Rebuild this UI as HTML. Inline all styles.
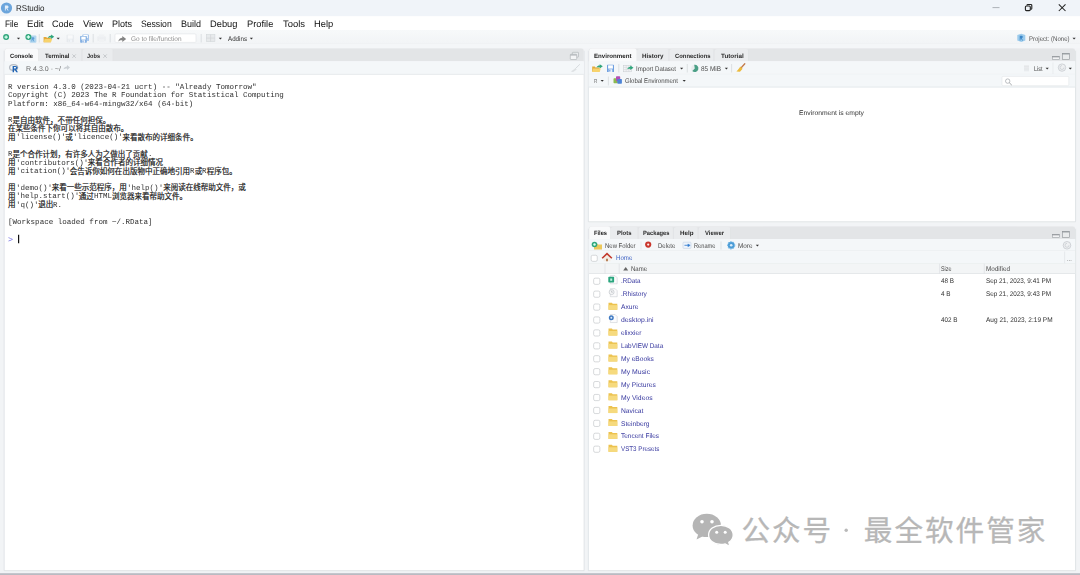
<!DOCTYPE html>
<html lang="en"><head><meta charset="utf-8"><title>RStudio</title>
<style>
html,body{margin:0;padding:0;}
body{width:1080px;height:575px;position:relative;overflow:hidden;background:#f2f4f6;font-family:"Liberation Sans", sans-serif;}
.t{position:absolute;white-space:pre;line-height:1;transform-origin:0 0;font-family:"Liberation Sans", sans-serif;text-rendering:geometricPrecision;}
.m{font-family:"Liberation Mono", monospace;}
svg{position:absolute;left:0;top:0;}
#txt{position:absolute;left:0;top:0;width:1080px;height:575px;will-change:transform;}
.cj{font-family:"Liberation Mono","Noto Sans CJK SC",monospace;font-size:7.53px;fill:#1a1a1a;stroke:#1a1a1a;stroke-width:0.2;}
.wm{font-family:"Liberation Sans","Noto Sans CJK SC",sans-serif;font-size:28.6px;fill:#b7b7b7;stroke:#b7b7b7;stroke-width:0.3;letter-spacing:2px;}
</style></head><body>
<svg width="1080" height="575" viewBox="0 0 1080 575">
<defs>
<linearGradient id="tg" x1="0" y1="0" x2="0" y2="1"><stop offset="0" stop-color="#f7f9fa"/><stop offset="1" stop-color="#f2f4f6"/></linearGradient>
</defs>
<rect x="0.00" y="0.00" width="1080.00" height="16.20" fill="#f0f4f9"/>
<rect x="0.00" y="16.20" width="1080.00" height="13.80" fill="#fff"/>
<rect x="0.00" y="30.00" width="1080.00" height="545.00" fill="#f2f4f6"/>
<rect x="0" y="30" width="1080" height="13.4" fill="url(#tg)"/>
<rect x="0.00" y="43.30" width="1080.00" height="0.60" fill="#eef0f2"/>
<rect x="0.00" y="43.90" width="1080.00" height="4.40" fill="#f4f6f8"/>
<rect x="0.00" y="570.30" width="1080.00" height="3.00" fill="#f1f3f6"/>
<rect x="0.00" y="573.20" width="1080.00" height="1.80" fill="#b9bbc2"/>
<rect x="115.00" y="33.90" width="81.00" height="8.50" rx="1" fill="#fff" stroke="#e0e3e6" stroke-width="0.6"/>
<path d="M4.50 570.30V51.30a3 3 0 0 1 3 -3h573.30a3 3 0 0 1 3 3V570.30z" fill="#fff"/>
<path d="M4.15 50.80V570.65H584.15V50.80" fill="none" stroke="#dadee1" stroke-width="0.7"/>
<path d="M4.50 61.40V51.10a2.8 2.8 0 0 1 2.8 -2.8h573.70a2.8 2.8 0 0 1 2.8 2.8V61.40z" fill="#e3e5e7"/>
<path d="M5.00 61.80V51.10a2.5 2.5 0 0 1 2.5 -2.5h28.20a2.5 2.5 0 0 1 2.5 2.5V61.80z" fill="#f9fafb"/>
<path d="M38.60 61.00V51.60a2.5 2.5 0 0 1 2.5 -2.5h38.60a2.5 2.5 0 0 1 2.5 2.5V61.00z" fill="#eaecee"/>
<rect x="81.60" y="50.10" width="0.6" height="10.90" fill="#dcdfe1"/>
<path d="M82.60 61.00V51.60a2.5 2.5 0 0 1 2.5 -2.5h25.70a2.5 2.5 0 0 1 2.5 2.5V61.00z" fill="#eaecee"/>
<rect x="112.70" y="50.10" width="0.6" height="10.90" fill="#dcdfe1"/>
<rect x="4.50" y="61.30" width="579.30" height="13.30" fill="#f4f7f9"/>
<rect x="4.50" y="73.90" width="579.30" height="0.7" fill="#e1e5e7"/>
<path d="M588.70 221.40V51.30a3 3 0 0 1 3 -3h480.50a3 3 0 0 1 3 3V221.40z" fill="#fff"/>
<path d="M588.35 50.80V221.75H1075.55V50.80" fill="none" stroke="#dadee1" stroke-width="0.7"/>
<path d="M588.70 61.40V51.10a2.8 2.8 0 0 1 2.8 -2.8h480.90a2.8 2.8 0 0 1 2.8 2.8V61.40z" fill="#e3e5e7"/>
<path d="M589.20 61.80V51.10a2.5 2.5 0 0 1 2.5 -2.5h42.40a2.5 2.5 0 0 1 2.5 2.5V61.80z" fill="#f9fafb"/>
<path d="M637.00 61.00V51.60a2.5 2.5 0 0 1 2.5 -2.5h27.20a2.5 2.5 0 0 1 2.5 2.5V61.00z" fill="#eaecee"/>
<rect x="668.60" y="50.10" width="0.6" height="10.90" fill="#dcdfe1"/>
<path d="M669.60 61.00V51.60a2.5 2.5 0 0 1 2.5 -2.5h39.60a2.5 2.5 0 0 1 2.5 2.5V61.00z" fill="#eaecee"/>
<rect x="713.60" y="50.10" width="0.6" height="10.90" fill="#dcdfe1"/>
<path d="M714.60 61.00V51.60a2.5 2.5 0 0 1 2.5 -2.5h29.00a2.5 2.5 0 0 1 2.5 2.5V61.00z" fill="#eaecee"/>
<rect x="748.00" y="50.10" width="0.6" height="10.90" fill="#dcdfe1"/>
<rect x="588.70" y="61.30" width="486.50" height="13.20" fill="#f4f7f9"/>
<rect x="588.70" y="73.90" width="486.50" height="0.6" fill="#e6e9eb"/>
<rect x="588.70" y="74.50" width="486.50" height="12.90" fill="#f4f7f9"/>
<rect x="588.70" y="86.70" width="486.50" height="0.7" fill="#dfe3e5"/>
<rect x="1002.00" y="76.40" width="66.80" height="9.30" rx="1" fill="#fff" stroke="#e3e6e8" stroke-width="0.6"/>
<path d="M588.70 570.30V229.30a3 3 0 0 1 3 -3h480.50a3 3 0 0 1 3 3V570.30z" fill="#fff"/>
<path d="M588.35 228.80V570.65H1075.55V228.80" fill="none" stroke="#dadee1" stroke-width="0.7"/>
<path d="M588.70 239.40V229.10a2.8 2.8 0 0 1 2.8 -2.8h480.90a2.8 2.8 0 0 1 2.8 2.8V239.40z" fill="#e3e5e7"/>
<path d="M589.20 239.80V229.10a2.5 2.5 0 0 1 2.5 -2.5h16.10a2.5 2.5 0 0 1 2.5 2.5V239.80z" fill="#f9fafb"/>
<path d="M610.70 239.00V229.60a2.5 2.5 0 0 1 2.5 -2.5h22.60a2.5 2.5 0 0 1 2.5 2.5V239.00z" fill="#eaecee"/>
<rect x="637.70" y="228.10" width="0.6" height="10.90" fill="#dcdfe1"/>
<path d="M638.70 239.00V229.60a2.5 2.5 0 0 1 2.5 -2.5h29.80a2.5 2.5 0 0 1 2.5 2.5V239.00z" fill="#eaecee"/>
<rect x="672.90" y="228.10" width="0.6" height="10.90" fill="#dcdfe1"/>
<path d="M673.90 239.00V229.60a2.5 2.5 0 0 1 2.5 -2.5h19.40a2.5 2.5 0 0 1 2.5 2.5V239.00z" fill="#eaecee"/>
<rect x="697.70" y="228.10" width="0.6" height="10.90" fill="#dcdfe1"/>
<path d="M698.70 239.00V229.60a2.5 2.5 0 0 1 2.5 -2.5h27.10a2.5 2.5 0 0 1 2.5 2.5V239.00z" fill="#eaecee"/>
<rect x="730.20" y="228.10" width="0.6" height="10.90" fill="#dcdfe1"/>
<rect x="588.70" y="239.00" width="486.50" height="12.20" fill="#f4f7f9"/>
<rect x="588.70" y="250.60" width="486.50" height="0.6" fill="#e6e9eb"/>
<rect x="588.70" y="251.20" width="486.50" height="12.40" fill="#f4f7f9"/>
<rect x="588.70" y="263.00" width="486.50" height="0.6" fill="#e2e6e8"/>
<rect x="588.70" y="263.60" width="486.50" height="10.40" fill="#f3f5f6"/>
<rect x="588.70" y="273.30" width="486.50" height="0.7" fill="#dfe3e5"/>
<rect x="591.15" y="255.25" width="6.10" height="6.10" rx="1.5" fill="#fff" stroke="#c6c9cc" stroke-width="0.7"/>
<rect x="593.65" y="278.15" width="6.20" height="6.20" rx="1.5" fill="#fff" stroke="#c6c9cc" stroke-width="0.7"/>
<rect x="593.65" y="291.07" width="6.20" height="6.20" rx="1.5" fill="#fff" stroke="#c6c9cc" stroke-width="0.7"/>
<rect x="593.65" y="303.99" width="6.20" height="6.20" rx="1.5" fill="#fff" stroke="#c6c9cc" stroke-width="0.7"/>
<rect x="593.65" y="316.91" width="6.20" height="6.20" rx="1.5" fill="#fff" stroke="#c6c9cc" stroke-width="0.7"/>
<rect x="593.65" y="329.83" width="6.20" height="6.20" rx="1.5" fill="#fff" stroke="#c6c9cc" stroke-width="0.7"/>
<rect x="593.65" y="342.75" width="6.20" height="6.20" rx="1.5" fill="#fff" stroke="#c6c9cc" stroke-width="0.7"/>
<rect x="593.65" y="355.67" width="6.20" height="6.20" rx="1.5" fill="#fff" stroke="#c6c9cc" stroke-width="0.7"/>
<rect x="593.65" y="368.59" width="6.20" height="6.20" rx="1.5" fill="#fff" stroke="#c6c9cc" stroke-width="0.7"/>
<rect x="593.65" y="381.51" width="6.20" height="6.20" rx="1.5" fill="#fff" stroke="#c6c9cc" stroke-width="0.7"/>
<rect x="593.65" y="394.43" width="6.20" height="6.20" rx="1.5" fill="#fff" stroke="#c6c9cc" stroke-width="0.7"/>
<rect x="593.65" y="407.35" width="6.20" height="6.20" rx="1.5" fill="#fff" stroke="#c6c9cc" stroke-width="0.7"/>
<rect x="593.65" y="420.27" width="6.20" height="6.20" rx="1.5" fill="#fff" stroke="#c6c9cc" stroke-width="0.7"/>
<rect x="593.65" y="433.19" width="6.20" height="6.20" rx="1.5" fill="#fff" stroke="#c6c9cc" stroke-width="0.7"/>
<rect x="593.65" y="446.11" width="6.20" height="6.20" rx="1.5" fill="#fff" stroke="#c6c9cc" stroke-width="0.7"/>
<circle cx="6.5" cy="8" r="5.6" fill="#6ca5dc"/>
<path d="M4.9 10.6V5.5h1.9c1.1 0 1.7.55 1.7 1.4 0 .8-.5 1.3-1.3 1.45l1.5 2.25h-1l-1.35-2.1h-.6v2.1z" fill="#e6f0fa"/>
<path d="M992.5 7.6h7" stroke="#9aa0a6" stroke-width="0.8"/>
<rect x="1025.4" y="6" width="4.9" height="4.6" rx="1" fill="none" stroke="#222" stroke-width="1.1"/>
<path d="M1027 5.600V5.400a.9.9 0 0 1 .9-.9h3a.9.9 0 0 1 .9.9v3a.9.9 0 0 1-.9.9h-.3" fill="none" stroke="#222" stroke-width="1.100"/>
<path d="M1058.800 4.300l6.700 6.700M1065.500 4.300l-6.700 6.700" stroke="#222" stroke-width="1.050"/>
<circle cx="6.1" cy="37.1" r="3.0" fill="#2fa57b"/>
<path d="M4.3999999999999995 37.1h3.4M6.1 35.4v3.4" stroke="#d8fff0" stroke-width="1.3"/>
<path d="M16.90 37.80h3.2l-1.6 1.8z" fill="#333"/>
<rect x="29.6" y="35.6" width="6.8" height="7.2" rx="1" fill="#b1d6ef"/>
<path d="M31.5 41.6v-4.3h1.5c.9 0 1.4.4 1.4 1.15 0 .65-.4 1.05-1 1.2l1.2 1.95h-.9l-1.05-1.8h-.4v1.8z" fill="#5a9fd6"/>
<circle cx="28.4" cy="37.0" r="3.0" fill="#2fa57b"/>
<path d="M26.7 37.0h3.4M28.4 35.3v3.4" stroke="#d8fff0" stroke-width="1.3"/>
<path d="M39.30 34.00V42.50" stroke="#d3d7da" stroke-width="0.7"/>
<path d="M43.6 37.0h2.6l.7.8h3.9v4.4h-7.2z" fill="#e3a93a"/>
<path d="M44.6 38.9h7.6l-1.2 3.4h-7.4z" fill="#f7d36c"/>
<path d="M47.800000000000004 38.0c.5-1.600 1.800-2.200 3.300-2.200v-1.200l3.100 2.100-3.100 2.200v-1.300c-1.300 0-2.300.100-3.300.400z" fill="#2fa57b"/>
<path d="M56.60 37.80h3.2l-1.6 1.8z" fill="#333"/>
<g opacity="0.4"><rect x="66.6" y="34.8" width="7.2" height="7.4" rx="0.6" fill="#d5dae0"/><rect x="67.69999999999999" y="35.3" width="5.0" height="3.40" fill="#fff"/><rect x="68.3" y="39.39" width="3.8000000000000003" height="2.81" fill="#eef3fb"/><rect x="68.8" y="39.83" width="1.2" height="1.92" fill="#d5dae0"/></g>
<g opacity="1"><rect x="82.3" y="34.5" width="6.6" height="6.6" rx="0.6" fill="#9dc0ea"/><rect x="83.39999999999999" y="35.0" width="4.3999999999999995" height="3.04" fill="#fff"/><rect x="84.0" y="38.59" width="3.1999999999999997" height="2.51" fill="#eef3fb"/><rect x="84.5" y="38.99" width="1.2" height="1.72" fill="#9dc0ea"/></g>
<g opacity="1"><rect x="80.2" y="36.1" width="6.6" height="6.6" rx="0.6" fill="#79a9e0"/><rect x="81.3" y="36.6" width="4.3999999999999995" height="3.04" fill="#fff"/><rect x="81.9" y="40.19" width="3.1999999999999997" height="2.51" fill="#eef3fb"/><rect x="82.4" y="40.59" width="1.2" height="1.72" fill="#79a9e0"/></g>
<path d="M93.20 34.00V42.50" stroke="#d3d7da" stroke-width="0.7"/>
<g opacity="0.18"><rect x="97.3" y="36.3" width="8.6" height="4.6" rx="1" fill="#cfd3d8"/><rect x="99" y="34.5" width="5.2" height="2.4" fill="#dde0e4"/><rect x="99" y="39.2" width="5.2" height="2.8" fill="#e6e8ec"/></g>
<path d="M110.20 34.00V42.50" stroke="#d3d7da" stroke-width="0.7"/>
<path d="M118.2 41.6c.6-2.600 2.100-3.700 4.100-3.800v-1.900l3.900 3.100-3.900 3.100v-1.900c-1.700-.1-3 .2-4.100 1.400z" fill="#858585"/>
<path d="M201.20 34.00V42.50" stroke="#d3d7da" stroke-width="0.7"/>
<g opacity="0.75"><rect x="206.3" y="34.6" width="8.6" height="7" fill="#e3e6e8" stroke="#c9cdd1" stroke-width="0.6"/><path d="M206.3 38.1h8.6M210.6 34.6v7" stroke="#c2c6ca" stroke-width="0.6"/></g>
<path d="M218.80 37.80h3.2l-1.6 1.8z" fill="#333"/>
<path d="M249.80 37.80h3.2l-1.6 1.8z" fill="#333"/>
<path d="M1017.3 35l4-1.3 4 1.3v5.6l-4 1.5-4-1.500z" fill="#9ccbec"/>
<path d="M1019.7 40.4v-4.600h1.6c1 0 1.500.45 1.500 1.200 0 .700-.400 1.100-1.050 1.250l1.250 2.150h-.900l-1.100-2h-.500v2z" fill="#3a86c8"/>
<path d="M1072.50 37.70h3.2l-1.6 1.8z" fill="#333"/>
<path d="M72.39999999999999 54.4l3.4 3.400M75.8 54.4l-3.400 3.400" stroke="#b6babd" stroke-width="0.7"/>
<path d="M103.39999999999999 54.4l3.4 3.400M106.8 54.4l-3.400 3.400" stroke="#b6babd" stroke-width="0.7"/>
<rect x="572.300" y="52.300" width="6.200" height="4.800" rx="0.600" fill="#e9ebed" stroke="#a9aeb2" stroke-width="0.600"/>
<rect x="570.300" y="54.300" width="6.400" height="5.200" rx="0.600" fill="#f4f5f6" stroke="#a9aeb2" stroke-width="0.600"/>
<path d="M570.300 55h6.400" stroke="#a9aeb2" stroke-width="1"/>
<ellipse cx="13.600" cy="67.600" rx="4" ry="2.900" fill="none" stroke="#b7bcc3" stroke-width="1.300"/>
<path d="M12.600 72.300v-6.300h2.700c1.500 0 2.300.700 2.300 1.800 0 .900-.600 1.500-1.500 1.700l1.900 2.800h-1.700l-1.600-2.600h-.700v2.600zm1.400-3.700h1.100c.700 0 1.100-.300 1.100-.800s-.400-.800-1.100-.800h-1.100z" fill="#2165b6"/>
<g opacity="0.45"><path d="M63.500 69.200c.600-1.900 1.900-2.700 3.500-2.800v-1.300l3 2.400-3 2.400v-1.400c-1.400-.100-2.500.100-3.500.700z" fill="#9aa0a6"/></g>
<g opacity="0.35"><path d="M579.800 64.300l-4.600 4.500" stroke="#9aa0a6" stroke-width="0.900"/><path d="M575.500 68.200l1.200 1.200-3.600 2.500-2.200-.300z" fill="#b5b9bd"/></g>
<rect x="1052.3" y="56.40" width="7" height="3" fill="#f2f3f4" stroke="#9a9fa3" stroke-width="0.6"/>
<path d="M1052.3 56.80h7" stroke="#8d9296" stroke-width="1"/>
<rect x="1062.3" y="53.40" width="7" height="6" fill="#e9ebec" stroke="#8d9296" stroke-width="0.6"/>
<path d="M1062.3 53.90h7" stroke="#8d9296" stroke-width="1"/>
<path d="M592.2 66.60000000000001h2.6l.7.8h3.9v4.4h-7.2z" fill="#e3a93a"/>
<path d="M593.2 68.5h7.6l-1.2 3.4h-7.4z" fill="#f7d36c"/>
<path d="M596.4000000000001 67.60000000000001c.5-1.600 1.800-2.200 3.300-2.200v-1.200l3.100 2.100-3.100 2.200v-1.300c-1.300 0-2.300.100-3.300.400z" fill="#2fa57b"/>
<g opacity="1"><rect x="607" y="64.8" width="7" height="7.2" rx="0.6" fill="#6e9fe0"/><rect x="608.1" y="65.3" width="4.8" height="3.31" fill="#fff"/><rect x="608.7" y="69.26" width="3.6" height="2.74" fill="#eef3fb"/><rect x="609.2" y="69.70" width="1.2" height="1.87" fill="#6e9fe0"/></g>
<path d="M618.80 64.00V72.50" stroke="#d3d7da" stroke-width="0.7"/>
<g><rect x="623.600" y="65.300" width="7.800" height="6.500" fill="#f3f4f6" stroke="#c5c9ce" stroke-width="0.500"/><path d="M623.600 67.400h7.800M623.600 69.600h7.800M626.200 65.300v6.500M628.800 65.300v6.500" stroke="#cfd3d7" stroke-width="0.500"/></g>
<path d="M627.200 69.200c.500-1.700 1.700-2.400 3.100-2.500v-1.300l3.200 2.300-3.200 2.300v-1.300c-1.200 0-2.200.100-3.100.500z" fill="#2fa57b"/>
<path d="M680.00 67.70h3.2l-1.6 1.8z" fill="#333"/>
<path d="M687.30 64.00V72.50" stroke="#d3d7da" stroke-width="0.7"/>
<circle cx="694.800" cy="68.400" r="3.600" fill="#e9ecee"/>
<path d="M694.800 68.400l-.6-3.550a3.600 3.600 0 1 1-1.900 6.150z" fill="#4a9f86"/>
<path d="M724.80 67.70h3.2l-1.6 1.8z" fill="#333"/>
<path d="M731.60 64.00V72.50" stroke="#d3d7da" stroke-width="0.7"/>
<path d="M744.800 63.700l-3.800 4.300" stroke="#c27a4c" stroke-width="1.300" stroke-linecap="round"/>
<path d="M740.300 66.600l2.300 2.200-2.600 2.900-3.600-.300c1.700-1.300 2.900-2.900 3.900-4.800z" fill="#ecba3c"/>
<g opacity="0.6"><rect x="1024" y="65" width="5" height="6.400" fill="#e6e8ea"/><path d="M1024 66.600h5M1024 68.200h5M1024 69.800h5" stroke="#cfd3d6" stroke-width="0.500"/></g>
<path d="M1045.60 67.70h3.2l-1.6 1.8z" fill="#333"/>
<path d="M1053.00 62.50V74.00" stroke="#e4e7e9" stroke-width="0.7"/>
<circle cx="1062" cy="67.600" r="3.700" fill="#eef0f2" stroke="#c6cacf" stroke-width="0.800"/>
<path d="M1062 65.500a2 2 0 1 0 2 2" fill="none" stroke="#c6cacf" stroke-width="0.700"/>
<path d="M1068.70 67.70h3.2l-1.6 1.8z" fill="#333"/>
<path d="M600.60 80.00h3.2l-1.6 1.8z" fill="#333"/>
<path d="M608.40 76.50V85.50" stroke="#d3d7da" stroke-width="0.7"/>
<rect x="613.500" y="78.300" width="4.300" height="5" rx="0.700" fill="#8bb950"/>
<rect x="616" y="76.200" width="4.200" height="5" rx="0.700" fill="#b34fb4"/>
<rect x="617.300" y="79" width="4.600" height="4.700" rx="0.700" fill="#4c84d6"/>
<path d="M682.60 80.00h3.2l-1.6 1.8z" fill="#333"/>
<circle cx="1007.700" cy="81.100" r="2.200" fill="none" stroke="#a1a5a9" stroke-width="0.700"/><path d="M1009.300 82.800l2.500 2.300" stroke="#999da1" stroke-width="0.900"/>
<rect x="1052.3" y="234.40" width="7" height="3" fill="#f2f3f4" stroke="#9a9fa3" stroke-width="0.6"/>
<path d="M1052.3 234.80h7" stroke="#8d9296" stroke-width="1"/>
<rect x="1062.3" y="231.40" width="7" height="6" fill="#e9ebec" stroke="#8d9296" stroke-width="0.6"/>
<path d="M1062.3 231.90h7" stroke="#8d9296" stroke-width="1"/>
<path d="M594 243.600h3l.800.900h4.200v5h-8z" fill="#ecc85a"/>
<circle cx="594.500" cy="244.500" r="2.800" fill="#2fa57b"/><circle cx="594.500" cy="244.500" r="1.200" fill="#d8fff0"/>
<path d="M641.00 241.50V249.50" stroke="#e0e3e5" stroke-width="0.7"/>
<circle cx="648.200" cy="244.600" r="3.100" fill="#c9352b"/><circle cx="648.200" cy="244.600" r="1.100" fill="#ffecec"/>
<rect x="683" y="242.200" width="8" height="6.200" rx="0.800" fill="#eef4fb" stroke="#b9cbe0" stroke-width="0.500"/><path d="M684.500 245.300h3.400v-1.300l2.300 1.300-2.300 1.400v-1.400z" fill="#2f7bd0" stroke="#2f7bd0" stroke-width="0.500"/>
<path d="M721.00 241.50V249.50" stroke="#d3d7da" stroke-width="0.7"/>
<circle cx="731.200" cy="245.300" r="3.500" fill="#4a9bd6" stroke="#7bbbe6" stroke-width="1.200" stroke-dasharray="1.400 1.100"/><circle cx="731.200" cy="245.300" r="1.300" fill="#d8ecfa"/>
<path d="M755.80 244.80h3.2l-1.6 1.8z" fill="#333"/>
<circle cx="1067" cy="245.300" r="3.800" fill="#eef0f2" stroke="#c6cacf" stroke-width="0.800"/><path d="M1067 243.300a2 2 0 1 0 2 2" fill="none" stroke="#c6cacf" stroke-width="0.700"/>
<path d="M603.500 257.500l3.500-3.300 3.500 3.300v3.700h-7z" fill="#f3ede6"/><path d="M606.200 261.200v-2.500h1.600v2.500z" fill="#a9673a"/><path d="M601.600 257.700l5.400-5.100 5.400 5.100-1.100 1.100-4.300-4-4.300 4z" fill="#c2382c"/>
<path d="M1064.600 251.500v11.800" stroke="#dfe3e5" stroke-width="0.700"/>
<path d="M605.00 263.70V273.80" stroke="#dde0e3" stroke-width="0.7"/>
<path d="M619.20 263.70V273.80" stroke="#dde0e3" stroke-width="0.7"/>
<path d="M939.60 263.70V273.80" stroke="#dde0e3" stroke-width="0.7"/>
<path d="M984.30 263.70V273.80" stroke="#dde0e3" stroke-width="0.7"/>
<path d="M623.200 270.400l2.500-3.400 2.500 3.400z" fill="#666"/>
<path d="M610.300 275.70h4.800l2.100 2.100v6h-6.900z" fill="#fbfbfc" stroke="#c3c7cc" stroke-width="0.500"/>
<rect x="608.300" y="276.80" width="5.800" height="5.600" rx="0.700" fill="#2aa57e"/><rect x="610.200" y="278.50" width="2" height="2.300" fill="#bff0dd"/>
<path d="M610.300 288.62h4.800l2.100 2.100v6h-6.900z" fill="#fbfbfc" stroke="#c3c7cc" stroke-width="0.500"/>
<circle cx="611.600" cy="292.12" r="2.500" fill="#f4f5f6" stroke="#b9bdc2" stroke-width="0.600"/><path d="M611.600 290.72v1.500h1.200" fill="none" stroke="#9ca1a6" stroke-width="0.500"/>
<path d="M608.500 302.74h3.400l.800 1h4.600v6h-8.800z" fill="#ecc24f"/><path d="M608.500 305.14h8.800v4.600h-8.800z" fill="#f6da7e"/>
<path d="M610.300 314.46h4.800l2.100 2.100v6h-6.900z" fill="#fbfbfc" stroke="#c3c7cc" stroke-width="0.500"/>
<circle cx="611.300" cy="317.86" r="2.500" fill="#3f79c2"/><circle cx="611.300" cy="317.86" r="1" fill="#dceaf8"/>
<path d="M608.500 328.58h3.400l.800 1h4.600v6h-8.800z" fill="#ecc24f"/><path d="M608.500 330.98h8.800v4.600h-8.800z" fill="#f6da7e"/>
<path d="M608.500 341.50h3.400l.800 1h4.600v6h-8.800z" fill="#ecc24f"/><path d="M608.500 343.90h8.800v4.600h-8.800z" fill="#f6da7e"/>
<path d="M608.500 354.42h3.400l.800 1h4.600v6h-8.800z" fill="#ecc24f"/><path d="M608.500 356.82h8.800v4.600h-8.800z" fill="#f6da7e"/>
<path d="M608.500 367.34h3.400l.800 1h4.600v6h-8.800z" fill="#ecc24f"/><path d="M608.500 369.74h8.800v4.600h-8.800z" fill="#f6da7e"/>
<path d="M608.500 380.26h3.400l.800 1h4.600v6h-8.800z" fill="#ecc24f"/><path d="M608.500 382.66h8.800v4.600h-8.800z" fill="#f6da7e"/>
<path d="M608.500 393.18h3.400l.800 1h4.600v6h-8.800z" fill="#ecc24f"/><path d="M608.500 395.58h8.800v4.600h-8.800z" fill="#f6da7e"/>
<path d="M608.500 406.10h3.400l.800 1h4.600v6h-8.800z" fill="#ecc24f"/><path d="M608.500 408.50h8.800v4.600h-8.800z" fill="#f6da7e"/>
<path d="M608.500 419.02h3.400l.800 1h4.600v6h-8.800z" fill="#ecc24f"/><path d="M608.500 421.42h8.800v4.600h-8.800z" fill="#f6da7e"/>
<path d="M608.500 431.94h3.400l.800 1h4.600v6h-8.800z" fill="#ecc24f"/><path d="M608.500 434.34h8.800v4.600h-8.800z" fill="#f6da7e"/>
<path d="M608.500 444.86h3.400l.800 1h4.600v6h-8.800z" fill="#ecc24f"/><path d="M608.500 447.26h8.800v4.600h-8.800z" fill="#f6da7e"/>
<path d="M18.600 234.800V243.300" stroke="#111" stroke-width="1.200"/>
<circle cx="846.200" cy="530.300" r="1.700" fill="#b9b9b9"/>
<g fill="#b5b5b5"><ellipse cx="706.800" cy="525.400" rx="14.200" ry="11.700"/><path d="M698.300 534l-1.800 5.400 6.400-3.200z"/></g>
<g fill="#b5b5b5" stroke="#fff" stroke-width="1.300"><path d="M720.900 525.300c6.800 0 12.300 4.300 12.300 9.600 0 3-1.700 5.600-4.400 7.400l1.100 4.200-4.700-2.600c-1.300.400-2.800.600-4.300.600-6.800 0-12.300-4.300-12.300-9.600s5.500-9.600 12.300-9.600z"/></g>
<g fill="#fff"><circle cx="702" cy="521.800" r="1.800"/><circle cx="712" cy="521.800" r="1.800"/><circle cx="716.700" cy="532.300" r="1.500"/><circle cx="725.200" cy="532.300" r="1.500"/></g>
<text class="cj" x="12.52" y="122.96">是自由软件，不带任何担保。</text>
<text class="cj" x="8.00" y="131.40">在某些条件下你可以将其自由散布。</text>
<text class="cj" x="8.00" y="139.84">用</text>
<text class="cj" x="65.25" y="139.84">或</text>
<text class="cj" x="122.50" y="139.84">来看散布的详细条件。</text>
<text class="cj" x="12.52" y="156.72">是个合作计划，有许多人为之做出了贡献</text>
<text class="cj" x="8.00" y="165.16">用</text>
<text class="cj" x="87.85" y="165.16">来看合作者的详细情况</text>
<text class="cj" x="8.00" y="173.60">用</text>
<text class="cj" x="69.77" y="173.60">会告诉你如何在出版物中正确地引用</text>
<text class="cj" x="194.77" y="173.60">或</text>
<text class="cj" x="206.82" y="173.60">程序包。</text>
<text class="cj" x="8.00" y="190.48">用</text>
<text class="cj" x="51.69" y="190.48">来看一些示范程序，用</text>
<text class="cj" x="163.15" y="190.48">来阅读在线帮助文件，或</text>
<text class="cj" x="8.00" y="198.92">用</text>
<text class="cj" x="78.81" y="198.92">通过</text>
<text class="cj" x="111.95" y="198.92">浏览器来看帮助文件。</text>
<text class="cj" x="8.00" y="207.36">用</text>
<text class="cj" x="38.13" y="207.36">退出</text>
<text class="wm" x="741.40" y="541.20">公众号</text>
<text class="wm" x="863.80" y="541.20">最全软件管家</text>
</svg>
<div id="txt">
<span id="t0" class="t" style="left:15.50px;top:4px;font-size:8.4px;color:#1c1c1c;transform:scaleX(0.9565);">RStudio</span>
<span id="t1" class="t" style="left:4.70px;top:19px;font-size:9.4px;color:#111;transform:scaleX(0.8802);">File</span>
<span id="t2" class="t" style="left:27.00px;top:19px;font-size:9.4px;color:#111;transform:scaleX(1.0213);">Edit</span>
<span id="t3" class="t" style="left:52.30px;top:19px;font-size:9.4px;color:#111;transform:scaleX(0.9678);">Code</span>
<span id="t4" class="t" style="left:83.00px;top:19px;font-size:9.4px;color:#111;transform:scaleX(0.9922);">View</span>
<span id="t5" class="t" style="left:112.00px;top:19px;font-size:9.4px;color:#111;transform:scaleX(0.9595);">Plots</span>
<span id="t6" class="t" style="left:141.30px;top:19px;font-size:9.4px;color:#111;transform:scaleX(0.9203);">Session</span>
<span id="t7" class="t" style="left:181.00px;top:19px;font-size:9.4px;color:#111;transform:scaleX(0.9588);">Build</span>
<span id="t8" class="t" style="left:210.30px;top:19px;font-size:9.4px;color:#111;transform:scaleX(0.9913);">Debug</span>
<span id="t9" class="t" style="left:247.00px;top:19px;font-size:9.4px;color:#111;transform:scaleX(0.9895);">Profile</span>
<span id="t10" class="t" style="left:282.70px;top:19px;font-size:9.4px;color:#111;transform:scaleX(1.0050);">Tools</span>
<span id="t11" class="t" style="left:314.00px;top:19px;font-size:9.4px;color:#111;transform:scaleX(1.0010);">Help</span>
<span id="t12" class="t" style="left:130.50px;top:37px;font-size:6.75px;color:#8e8e8e;transform:scaleX(0.9613);">Go to file/function</span>
<span id="t13" class="t" style="left:227.50px;top:37px;font-size:6.75px;color:#333;transform:scaleX(0.9205);">Addins</span>
<span id="t14" class="t" style="left:1028.50px;top:37px;font-size:6.75px;color:#555;transform:scaleX(0.8919);">Project: (None)</span>
<span id="t15" class="t" style="left:10.00px;top:54px;font-size:6.2px;color:#1d1d1d;font-weight:bold;transform:scaleX(0.9418);">Console</span>
<span id="t16" class="t" style="left:44.50px;top:54px;font-size:6.2px;color:#2b2b2b;font-weight:bold;transform:scaleX(0.9667);">Terminal</span>
<span id="t17" class="t" style="left:87.00px;top:54px;font-size:6.2px;color:#2b2b2b;font-weight:bold;transform:scaleX(0.8995);">Jobs</span>
<span id="t18" class="t" style="left:26.00px;top:67px;font-size:6.75px;color:#6a6a6a;transform:scaleX(1.0419);">R 4.3.0 · ~/</span>
<span id="t19" class="t" style="left:593.50px;top:54px;font-size:6.2px;color:#1d1d1d;font-weight:bold;transform:scaleX(0.9913);">Environment</span>
<span id="t20" class="t" style="left:642.00px;top:54px;font-size:6.2px;color:#2b2b2b;font-weight:bold;transform:scaleX(1.0081);">History</span>
<span id="t21" class="t" style="left:674.50px;top:54px;font-size:6.2px;color:#2b2b2b;font-weight:bold;transform:scaleX(0.9471);">Connections</span>
<span id="t22" class="t" style="left:721.00px;top:54px;font-size:6.2px;color:#2b2b2b;font-weight:bold;transform:scaleX(1.0209);">Tutorial</span>
<span id="t23" class="t" style="left:635.60px;top:67px;font-size:6.75px;color:#4a4a4a;transform:scaleX(0.9033);">Import Dataset</span>
<span id="t24" class="t" style="left:701.00px;top:67px;font-size:6.75px;color:#4a4a4a;transform:scaleX(0.9517);">85 MiB</span>
<span id="t25" class="t" style="left:1033.50px;top:67px;font-size:6.75px;color:#4a4a4a;transform:scaleX(0.8083);">List</span>
<span id="t26" class="t" style="left:593.60px;top:80px;font-size:5.8px;color:#666;transform:scaleX(0.7642);">R</span>
<span id="t27" class="t" style="left:625.00px;top:79px;font-size:6.75px;color:#4a4a4a;transform:scaleX(0.8940);">Global Environment</span>
<span id="t28" class="t" style="left:799.00px;top:111px;font-size:6.75px;color:#333;transform:scaleX(1.0014);">Environment is empty</span>
<span id="t29" class="t" style="left:593.50px;top:231px;font-size:6.2px;color:#1d1d1d;font-weight:bold;transform:scaleX(0.9214);">Files</span>
<span id="t30" class="t" style="left:617.00px;top:231px;font-size:6.2px;color:#2b2b2b;font-weight:bold;transform:scaleX(0.9577);">Plots</span>
<span id="t31" class="t" style="left:642.50px;top:231px;font-size:6.2px;color:#2b2b2b;font-weight:bold;transform:scaleX(0.9278);">Packages</span>
<span id="t32" class="t" style="left:680.00px;top:231px;font-size:6.2px;color:#2b2b2b;font-weight:bold;transform:scaleX(1.0058);">Help</span>
<span id="t33" class="t" style="left:705.00px;top:231px;font-size:6.2px;color:#2b2b2b;font-weight:bold;transform:scaleX(0.9575);">Viewer</span>
<span id="t34" class="t" style="left:604.70px;top:244px;font-size:6.75px;color:#4a4a4a;transform:scaleX(0.8837);">New Folder</span>
<span id="t35" class="t" style="left:658.00px;top:244px;font-size:6.75px;color:#4a4a4a;transform:scaleX(0.8865);">Delete</span>
<span id="t36" class="t" style="left:693.50px;top:244px;font-size:6.75px;color:#4a4a4a;transform:scaleX(0.8426);">Rename</span>
<span id="t37" class="t" style="left:737.50px;top:244px;font-size:6.75px;color:#4a4a4a;transform:scaleX(0.9421);">More</span>
<span id="t38" class="t" style="left:616.30px;top:256px;font-size:6.75px;color:#3f62c4;transform:scaleX(0.9048);">Home</span>
<span id="t39" class="t" style="left:1066.80px;top:257px;font-size:6.75px;color:#777;transform:scaleX(0.8332);">...</span>
<span id="t40" class="t" style="left:631.00px;top:267px;font-size:6.75px;color:#4a4a4a;transform:scaleX(0.8881);">Name</span>
<span id="t41" class="t" style="left:941.00px;top:267px;font-size:6.75px;color:#4a4a4a;transform:scaleX(0.7990);">Size</span>
<span id="t42" class="t" style="left:986.00px;top:267px;font-size:6.75px;color:#4a4a4a;transform:scaleX(0.9406);">Modified</span>
<span id="t43" class="t" style="left:621.40px;top:279px;font-size:6.75px;color:#37389f;transform:scaleX(0.9326);">.RData</span>
<span id="t44" class="t" style="left:941.00px;top:279px;font-size:6.75px;color:#333;transform:scaleX(0.9359);">48 B</span>
<span id="t45" class="t" style="left:986.00px;top:279px;font-size:6.75px;color:#333;transform:scaleX(0.9412);">Sep 21, 2023, 9:41 PM</span>
<span id="t46" class="t" style="left:621.40px;top:292px;font-size:6.75px;color:#37389f;transform:scaleX(0.9722);">.Rhistory</span>
<span id="t47" class="t" style="left:941.00px;top:292px;font-size:6.75px;color:#333;transform:scaleX(0.9368);">4 B</span>
<span id="t48" class="t" style="left:986.00px;top:292px;font-size:6.75px;color:#333;transform:scaleX(0.9412);">Sep 21, 2023, 9:43 PM</span>
<span id="t49" class="t" style="left:621.40px;top:305px;font-size:6.75px;color:#37389f;transform:scaleX(0.9864);">Axure</span>
<span id="t50" class="t" style="left:621.40px;top:318px;font-size:6.75px;color:#37389f;transform:scaleX(1.0099);">desktop.ini</span>
<span id="t51" class="t" style="left:941.00px;top:318px;font-size:6.75px;color:#333;transform:scaleX(0.9353);">402 B</span>
<span id="t52" class="t" style="left:986.00px;top:318px;font-size:6.75px;color:#333;transform:scaleX(0.9643);">Aug 21, 2023, 2:19 PM</span>
<span id="t53" class="t" style="left:621.40px;top:331px;font-size:6.75px;color:#37389f;transform:scaleX(0.9707);">elixxier</span>
<span id="t54" class="t" style="left:621.40px;top:344px;font-size:6.75px;color:#37389f;transform:scaleX(0.9450);">LabVIEW Data</span>
<span id="t55" class="t" style="left:621.40px;top:357px;font-size:6.75px;color:#37389f;transform:scaleX(0.9823);">My eBooks</span>
<span id="t56" class="t" style="left:621.40px;top:370px;font-size:6.75px;color:#37389f;transform:scaleX(1.0211);">My Music</span>
<span id="t57" class="t" style="left:621.40px;top:383px;font-size:6.75px;color:#37389f;transform:scaleX(0.9868);">My Pictures</span>
<span id="t58" class="t" style="left:621.40px;top:396px;font-size:6.75px;color:#37389f;transform:scaleX(1.0067);">My Videos</span>
<span id="t59" class="t" style="left:621.40px;top:409px;font-size:6.75px;color:#37389f;transform:scaleX(0.9949);">Navicat</span>
<span id="t60" class="t" style="left:621.40px;top:422px;font-size:6.75px;color:#37389f;transform:scaleX(0.9894);">Steinberg</span>
<span id="t61" class="t" style="left:621.40px;top:434px;font-size:6.75px;color:#37389f;transform:scaleX(0.9577);">Tencent Files</span>
<span id="t62" class="t" style="left:621.40px;top:447px;font-size:6.75px;color:#37389f;transform:scaleX(0.9222);">VST3 Presets</span>
<span id="t63" class="t m" style="left:8.00px;top:85px;font-size:7.53px;color:#2e2e2e;transform:scaleX(1.0022);">R version 4.3.0 (2023-04-21 ucrt) -- "Already Tomorrow"</span>
<span id="t64" class="t m" style="left:8.00px;top:93px;font-size:7.53px;color:#2e2e2e;transform:scaleX(1.0022);">Copyright (C) 2023 The R Foundation for Statistical Computing</span>
<span id="t65" class="t m" style="left:8.00px;top:102px;font-size:7.53px;color:#2e2e2e;transform:scaleX(1.0022);">Platform: x86_64-w64-mingw32/x64 (64-bit)</span>
<span id="t66" class="t m" style="left:8.00px;top:118px;font-size:7.53px;color:#2e2e2e;transform:scaleX(1.0010);">R</span>
<span id="t67" class="t m" style="left:15.53px;top:135px;font-size:7.53px;color:#2e2e2e;transform:scaleX(1.0019);">'license()'</span>
<span id="t68" class="t m" style="left:72.78px;top:135px;font-size:7.53px;color:#2e2e2e;transform:scaleX(1.0019);">'licence()'</span>
<span id="t69" class="t m" style="left:8.00px;top:152px;font-size:7.53px;color:#2e2e2e;transform:scaleX(1.0010);">R</span>
<span id="t70" class="t m" style="left:148.06px;top:152px;font-size:7.53px;color:#2e2e2e;transform:scaleX(1.0010);">.</span>
<span id="t71" class="t m" style="left:15.53px;top:161px;font-size:7.53px;color:#2e2e2e;transform:scaleX(1.0021);">'contributors()'</span>
<span id="t72" class="t m" style="left:15.53px;top:169px;font-size:7.53px;color:#2e2e2e;transform:scaleX(1.0021);">'citation()'</span>
<span id="t73" class="t m" style="left:190.25px;top:169px;font-size:7.53px;color:#2e2e2e;transform:scaleX(1.0010);">R</span>
<span id="t74" class="t m" style="left:202.30px;top:169px;font-size:7.53px;color:#2e2e2e;transform:scaleX(1.0010);">R</span>
<span id="t75" class="t m" style="left:15.53px;top:186px;font-size:7.53px;color:#2e2e2e;transform:scaleX(1.0018);">'demo()'</span>
<span id="t76" class="t m" style="left:126.99px;top:186px;font-size:7.53px;color:#2e2e2e;transform:scaleX(1.0018);">'help()'</span>
<span id="t77" class="t m" style="left:15.53px;top:194px;font-size:7.53px;color:#2e2e2e;transform:scaleX(1.0020);">'help.start()'</span>
<span id="t78" class="t m" style="left:93.87px;top:194px;font-size:7.53px;color:#2e2e2e;transform:scaleX(1.0018);">HTML</span>
<span id="t79" class="t m" style="left:15.53px;top:203px;font-size:7.53px;color:#2e2e2e;transform:scaleX(1.0017);">'q()'</span>
<span id="t80" class="t m" style="left:53.19px;top:203px;font-size:7.53px;color:#2e2e2e;transform:scaleX(1.0010);">R.</span>
<span id="t81" class="t m" style="left:8.00px;top:220px;font-size:7.53px;color:#2e2e2e;transform:scaleX(1.0022);">[Workspace loaded from ~/.RData]</span>
<span id="t82" class="t m" style="left:8.00px;top:237px;font-size:8.13px;color:#7673e3;transform:scaleX(1.0469);">&gt;</span>
</div>
</body></html>
